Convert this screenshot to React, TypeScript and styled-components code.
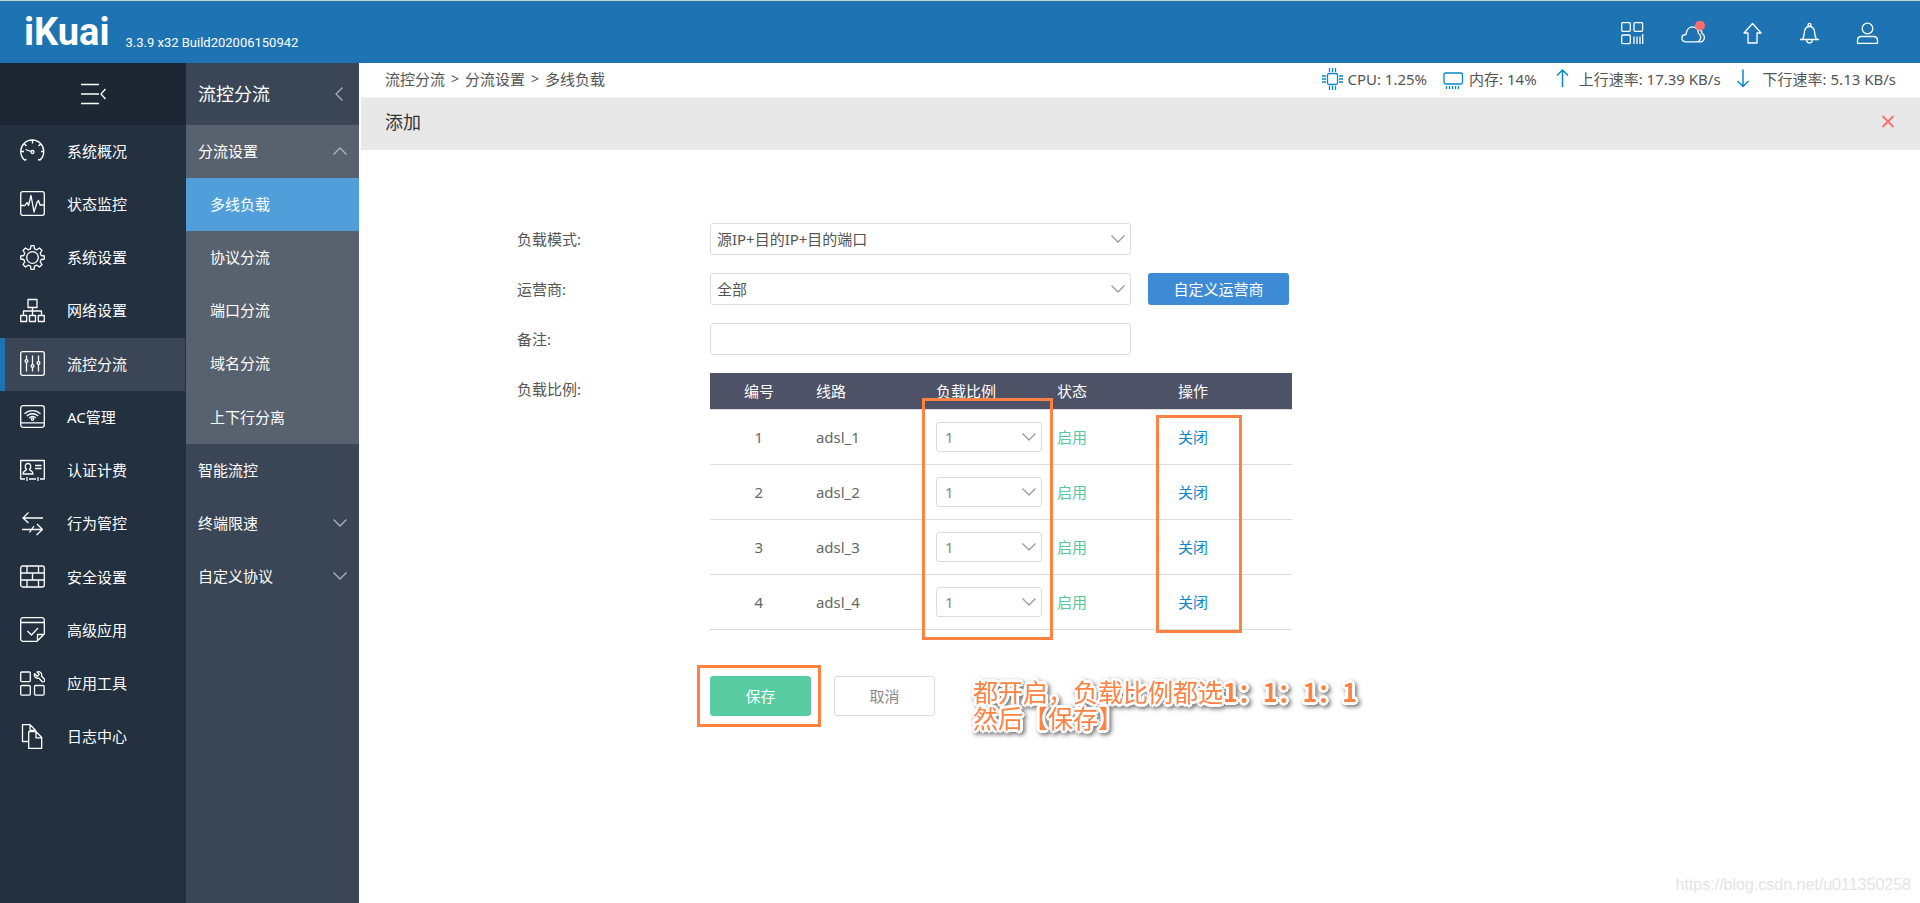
import React from "react";
import styled, { createGlobalStyle, css } from "styled-components";

const GlobalStyle = createGlobalStyle`
  * { box-sizing: border-box; }
  body { margin: 0; background: #fff; }
  body, button, input, select, table {
    font-family: "Noto Sans", "Noto Sans CJK SC", sans-serif;
    font-size: 15px;
    line-height: 20px;
    color: #555;
  }
  ul { list-style: none; margin: 0; padding: 0; }
  a { color: inherit; text-decoration: none; }
  button { cursor: pointer; padding: 0; border: 0; background: none; }
  svg { display: block; flex: none; }
`;

const ORANGE = "#ff8243";

const Page = styled.div`
  display: flex;
  flex-direction: column;
  min-height: 100vh;
`;

const Header = styled.header`
  display: flex;
  align-items: center;
  height: 63px;
  padding: 0 41px 0 24px;
  border-top: 1px solid #c5cdd3;
  background: #1e73b3;
  color: #fff;
`;

const Logo = styled.a`
  font-family: Roboto, sans-serif;
  font-size: 38px;
  font-weight: 700;
  line-height: 40px;
`;

const Version = styled.span`
  margin: 22px auto 0 16px;
  font-family: Roboto, "Noto Sans", sans-serif;
  font-size: 13px;
  line-height: 20px;
`;

const HeaderTools = styled.div`
  display: flex;
  align-items: center;
  gap: 34px;
  padding-top: 2px;
`;

const IconButton = styled.button`
  display: block;
  color: #fff;
`;

const Body = styled.div`
  display: flex;
  flex: 1;
`;

const Sidebar = styled.nav`
  flex: none;
  width: 186px;
  background: #223040;
  color: #fff;
`;

const Collapse = styled.button`
  display: flex;
  align-items: center;
  justify-content: center;
  width: 100%;
  height: 62px;
  padding-left: 2px;
  background: #1c2733;
  color: #fff;
`;

const MenuList = styled.ul`
  display: grid;
  grid-template-rows: repeat(12, 1fr);
  height: 639px;
`;

const MenuLink = styled.a<{ $active?: boolean }>`
  display: flex;
  align-items: center;
  gap: 22px;
  height: 100%;
  margin-right: 1px;
  padding: 0 0 2px 20px;
  ${(p) =>
    p.$active &&
    css`
      background: #3a4555;
      box-shadow: inset 5px 0 #1e73b3;
    `}
`;

const SubSidebar = styled.nav`
  flex: none;
  width: 173px;
  background: #3a4656;
  color: #fff;
`;

const SubTitle = styled.h2`
  display: flex;
  align-items: center;
  justify-content: space-between;
  height: 62px;
  margin: 0;
  padding: 0 16px 0 12px;
  font-size: 18px;
  font-weight: 400;
  line-height: 24px;
`;

const SubList = styled.ul`
  display: grid;
  grid-template-rows: repeat(9, 1fr);
  height: 479px;
`;

const SubLink = styled.a<{ $tone?: "group" | "active"; $nested?: boolean }>`
  display: flex;
  align-items: center;
  justify-content: space-between;
  height: 100%;
  padding: 0 12px 2px ${(p) => (p.$nested ? 24 : 12)}px;
  background: ${(p) =>
    p.$tone === "active" ? "#509fda" : p.$tone === "group" ? "#58616e" : "transparent"};
`;

const Main = styled.main`
  display: flex;
  flex: 1;
  flex-direction: column;
  min-width: 0;
  padding-left: 2px;
`;

const InfoBar = styled.div`
  display: flex;
  align-items: center;
  justify-content: space-between;
  height: 35px;
  padding: 0 24px 2px;
  border-bottom: 1px solid #f2f2f2;
`;

const Crumbs = styled.nav`
  display: flex;
  gap: 6px;
  span { font-size: 14px; }
`;

const Stats = styled.div`
  display: flex;
  gap: 16px;
`;

const Stat = styled.span`
  display: flex;
  align-items: center;
  white-space: nowrap;
`;

const PanelHead = styled.div`
  display: flex;
  align-items: center;
  justify-content: space-between;
  height: 52px;
  padding: 0 25px 4px 24px;
  background: #e8e8e8;
`;

const PanelTitle = styled.h1`
  margin: 0;
  color: #333;
  font-size: 18px;
  font-weight: 400;
  line-height: 24px;
`;

const Form = styled.form`
  display: grid;
  grid-template-columns: 193px minmax(0, 582px);
  row-gap: 18px;
  padding: 73px 0 0 10%;
`;

const Label = styled.label`
  line-height: 32px;
`;

const Field = styled.div`
  display: flex;
  gap: 17px;
  height: 32px;
`;

const control = css`
  width: 100%;
  height: 100%;
  border: 1px solid #dcdcdc;
  border-radius: 3px;
  background: #fff;
  outline: none;
`;

const TextInput = styled.input`
  ${control}
  padding: 0 6px;
`;

const ControlBox = styled.div<{ $small?: boolean }>`
  position: relative;
  width: ${(p) => (p.$small ? 106 : 421)}px;
  height: ${(p) => (p.$small ? 30 : 32)}px;
  svg {
    position: absolute;
    top: 50%;
    right: 6px;
    margin-top: -4px;
    pointer-events: none;
    color: #999;
  }
`;

const Select = styled.select<{ $small?: boolean }>`
  ${control}
  appearance: none;
  padding: 0 24px 0 ${(p) => (p.$small ? 8 : 6)}px;
  color: ${(p) => (p.$small ? "#888" : "#555")};
`;

const OperatorButton = styled.button`
  width: 141px;
  border-radius: 3px;
  background: #3d8bd5;
  color: #fff;
`;

const TableWrap = styled.div`
  position: relative;
`;

const Table = styled.table`
  width: 100%;
  table-layout: fixed;
  border-collapse: collapse;
  th, td {
    padding: 0 8px;
    border-bottom: 1px solid #dcdcdc;
    text-align: left;
  }
  th {
    height: 36px;
    background: #4d5266;
    color: #fff;
    font-weight: 400;
  }
  td { height: 55px; color: #666; }
  th:first-child, td:first-child { text-align: center; }
`;

const Status = styled.span`
  color: #56c99f;
`;

const RowAction = styled.button`
  color: #0d85cc;
`;

const Mark = styled.div`
  position: absolute;
  border: 3px solid ${ORANGE};
  pointer-events: none;
`;

const RatioMark = styled(Mark)`
  top: 25px;
  left: 212px;
  width: 131px;
  height: 242px;
`;

const ActionMark = styled(Mark)`
  top: 42px;
  left: 446px;
  width: 86px;
  height: 218px;
`;

const SaveMark = styled(Mark)`
  inset: -11px -10px -11px -13px;
`;

const Actions = styled.div`
  grid-column: 2;
  display: flex;
  align-items: flex-start;
  gap: 23px;
  margin-top: 28px;
`;

const SaveBox = styled.div`
  position: relative;
`;

const FormButton = styled.button<{ $primary?: boolean }>`
  display: block;
  flex: none;
  width: 101px;
  height: 40px;
  border: 1px solid ${(p) => (p.$primary ? "#59cba1" : "#dcdcdc")};
  border-radius: 3px;
  background: ${(p) => (p.$primary ? "#59cba1" : "#fff")};
  color: ${(p) => (p.$primary ? "#fff" : "#888")};
`;

const Note = styled.p`
  margin: 2px 0 0 15px;
  color: ${ORANGE};
  font-family: "Noto Sans CJK SC", sans-serif;
  font-size: 25px;
  line-height: 26px;
  white-space: nowrap;
  text-shadow: 3px 0 #fff, -3px 0 #fff, 0 3px #fff, 0 -3px #fff,
    2px 2px #fff, -2px 2px #fff, 2px -2px #fff, -2px -2px #fff;
  filter: drop-shadow(2px 2px 2px rgba(0, 0, 0, 0.55));
  b { font-weight: 700; }
`;

const Watermark = styled.footer`
  margin-top: auto;
  padding: 0 9px 8px 0;
  color: #e4e4e4;
  font-family: "Liberation Sans", sans-serif;
  font-size: 16px;
  line-height: 20px;
  text-align: right;
`;

type IconProps = {
  w?: number;
  h?: number;
  stroke?: number;
  color?: string;
  children: React.ReactNode;
};

const Icon = ({ w = 25, h = 25, stroke = 1.3, color = "currentColor", children }: IconProps) => (
  <svg
    width={w}
    height={h}
    viewBox={`0 0 ${w} ${h}`}
    fill="none"
    stroke={color}
    strokeWidth={stroke}
    strokeLinejoin="round"
    aria-hidden="true"
  >
    {children}
  </svg>
);

const Chevron = ({ up = false, color }: { up?: boolean; color?: string }) => (
  <Icon w={14} h={8} color={color}>
    <path d={up ? "M.5 7.5 7 1l6.500 6.500" : "M.5.5 7 7 13.500.5"} />
  </Icon>
);

const menu: { label: string; art: React.ReactNode }[] = [
  {
    label: "系统概况",
    art: (
      <>
        <path d="M6.500 21.500 4.500 22A11.500 11.500 0 1 1 20 22l-2-.5M1 13.500h3M21 13.500h3M12.500 2v3.500M4.500 6l2 2M20.500 6l-2 2" />
        <path d="m5.500 11.500 5.500 2" />
        <circle cx="12.500" cy="14" r="1.500" />
      </>
    ),
  },
  {
    label: "状态监控",
    art: (
      <>
        <rect x=".7" y=".7" width="23.600" height="23.600" rx="2" />
        <path d="M1 14.500h4l2-3 1.500 3L11 4.500l3 16.500 3-9.500 1.500-2 1.500 4.500h4.500" />
      </>
    ),
  },
  {
    label: "系统设置",
    art: (
      <>
        <circle cx="12.500" cy="12.500" r="5.800" />
        <path d="M10.500 3.800 11 .7h3l.5 3.100 2.400 1 2.600-1.800 2.500 2.500-1.800 2.600 1 2.400 3.100.5v3l-3.100.5-1 2.400 1.800 2.600-2.500 2.500-2.600-1.800-2.400 1-.5 3.100h-3l-.5-3.100-2.400-1L5.500 22 3 19.500l1.800-2.600-1-2.400-3.100-.5v-3l3.100-.5 1-2.400L3 5.500 5.500 3l2.600 1.800z" />
      </>
    ),
  },
  {
    label: "网络设置",
    art: (
      <>
        <rect x="8" y="1.500" width="9" height="8" />
        <path d="M12.500 9.500v8M3.500 17.500V13h18v4.500" />
        <rect x=".7" y="17.500" width="6" height="6" />
        <rect x="9.500" y="17.500" width="6" height="6" />
        <rect x="18.300" y="17.500" width="6" height="6" />
      </>
    ),
  },
  {
    label: "流控分流",
    art: (
      <>
        <rect x=".7" y=".7" width="23.600" height="23.600" rx="2" />
        <path d="M6.500 4.500v4M6.500 11.500v9M12.500 4.500v9M12.500 16.500v4M18.500 4.500v6M18.500 13.500v7" />
        <circle cx="6.500" cy="10" r="1.400" />
        <circle cx="12.500" cy="15" r="1.400" />
        <circle cx="18.500" cy="12" r="1.400" />
      </>
    ),
  },
  {
    label: "AC管理",
    art: (
      <>
        <rect x=".7" y="1.700" width="23.600" height="21.600" rx="2.500" />
        <path d="M1 18.800h23.500M4.500 9.800a11.500 11.500 0 0 1 16 0M6.800 12a8.400 8.400 0 0 1 11.400 0M9.200 14a5 5 0 0 1 6.600 0" />
        <circle cx="12.500" cy="15" r="1.200" />
      </>
    ),
  },
  {
    label: "认证计费",
    art: (
      <>
        <path d="M5 21H.7V2.500h23.600V21H20M9 21h7M7 19v4M18 19v4M15 7.500h6.500M15 10.500h6.500" />
        <path d="M6.500 11.500C4 8.500 5.500 5.500 8 5.500s4 3 1.500 6c.5 1.500 3.500 1 3.500 4.500H3c0-3.500 3-3 3.500-4.500z" />
      </>
    ),
  },
  {
    label: "行为管控",
    art: <path d="M23 7H2.500M8.500 1.500 3 7l5.500 5M2 18.500h20.500M17 13l5.500 5.500-6 5.500M9.500 21.500l4.500-6.500" />,
  },
  {
    label: "安全设置",
    art: (
      <>
        <rect x=".7" y="2" width="23.600" height="21" rx="2" />
        <path d="M1 9h23.500M1 16h23.500M7 2v7M18.500 2v7M12.500 9v7M7 16v7M18.500 16v7" />
      </>
    ),
  },
  {
    label: "高级应用",
    art: (
      <>
        <path d="M17 24.300H3a2.300 2.300 0 0 1-2.300-2.300V3A2.300 2.300 0 0 1 3 .7h19A2.300 2.300 0 0 1 24.300 3v14zM1 5.500h23.500M17.500 24v-6.500H24" />
        <path d="m7.500 14 4 4 6.500-7" />
      </>
    ),
  },
  {
    label: "应用工具",
    art: (
      <>
        <rect x=".7" y="1" width="9.600" height="9.600" rx="1" />
        <rect x=".7" y="14.500" width="9.600" height="9.600" rx="1" />
        <rect x="14.500" y="14.500" width="9.600" height="9.600" rx="1" />
        <path d="M17 1c2.500-1 5.500 1 4.500 4l3 3.200c1 1.600-1 3.400-2.500 2.300l-3-3.300c-3 .6-5.300-1.500-4.500-4.500l2.800 2.600 1.900-1.900z" />
      </>
    ),
  },
  {
    label: "日志中心",
    art: (
      <>
        <path d="M8 17.500H2.500V.7H10l5.500 5.500V8M10 1v5.500h5" />
        <path d="M8.700 7.700h7.500l5.500 5.800v10.800h-13zM16 8v5.800h5.500" />
      </>
    ),
  },
];

const submenu: {
  label: string;
  nested?: boolean;
  tone?: "group" | "active";
  arrow?: "up" | "down";
}[] = [
  { label: "分流设置", tone: "group", arrow: "up" },
  { label: "多线负载", tone: "active", nested: true },
  { label: "协议分流", tone: "group", nested: true },
  { label: "端口分流", tone: "group", nested: true },
  { label: "域名分流", tone: "group", nested: true },
  { label: "上下行分离", tone: "group", nested: true },
  { label: "智能流控" },
  { label: "终端限速", arrow: "down" },
  { label: "自定义协议", arrow: "down" },
];

const lines = ["adsl_1", "adsl_2", "adsl_3", "adsl_4"];
const BLUE = "#0d85cc";

export default function App() {
  return (
    <Page lang="zh-CN">
      <GlobalStyle />
      <Header>
        <Logo href="#">iKuai</Logo>
        <Version>3.3.9 x32 Build202006150942</Version>
        <HeaderTools>
          <IconButton aria-label="应用">
            <Icon w={30} h={24}>
              <rect x="4.700" y="1.700" width="8.600" height="8.600" rx="1" />
              <rect x="17" y="1.700" width="8.600" height="8.600" rx="1" />
              <rect x="4.700" y="14" width="8.600" height="8.600" rx="1" />
              <path d="M17 15.500v7.500M20 15.500v7.500M23 15.500v7.500M25.700 13v10" />
            </Icon>
          </IconButton>
          <IconButton aria-label="云">
            <Icon w={24} h={24}>
              <path d="M5 20.800c-5.500 0-5.500-7 0-7.300C6 3 17.500 4 17.500 12.500c3.500 1.500 2.500 8.300-1.500 8.300zM18 9c2 0 3 1.500 3 3.500 4 2 2.500 8.300-1.500 8.300H16" />
              <circle cx="19" cy="4.500" r="5" fill="#ff6b6e" stroke="none" />
            </Icon>
          </IconButton>
          <IconButton aria-label="升级">
            <Icon w={24} h={24}>
              <path d="M13.500 2.500 22 12h-4v10H9V12H5z" />
            </Icon>
          </IconButton>
          <IconButton aria-label="通知">
            <Icon w={24} h={24}>
              <path d="M3 18.500h19M5.500 18.500c1.500-2.500 1.500-4 2-8 .5-3 2-5 5-5s4.500 2 5 5c.5 4 .5 5.500 2 8M9.500 19c.5 4 5.500 4 6 0" />
              <circle cx="12.500" cy="3.800" r="1.500" />
            </Icon>
          </IconButton>
          <IconButton aria-label="用户">
            <Icon w={24} h={24}>
              <circle cx="12.500" cy="7.500" r="5.300" />
              <path d="M2.500 22.300v-2.800q0-4 4-4h12q4 0 4 4v2.800z" />
            </Icon>
          </IconButton>
        </HeaderTools>
      </Header>
      <Body>
        <Sidebar>
          <Collapse aria-label="收起菜单">
            <Icon w={26} h={22}>
              <path d="M0 1.500h18M0 11h18M0 20.500h18M24.500 6 20 11l4.500 5" />
            </Icon>
          </Collapse>
          <MenuList>
            {menu.map((m) => (
              <li key={m.label}>
                <MenuLink href="#" $active={m.label === "流控分流"}>
                  <Icon>{m.art}</Icon>
                  {m.label}
                </MenuLink>
              </li>
            ))}
          </MenuList>
        </Sidebar>
        <SubSidebar>
          <SubTitle>
            流控分流
            <Icon w={8} h={14} color="#a9afb7">
              <path d="M7.500.5 1 7l6.500 6.500" />
            </Icon>
          </SubTitle>
          <SubList>
            {submenu.map((s) => (
              <li key={s.label}>
                <SubLink href="#" $tone={s.tone} $nested={s.nested}>
                  {s.label}
                  {s.arrow && <Chevron up={s.arrow === "up"} color="#b0b5bb" />}
                </SubLink>
              </li>
            ))}
          </SubList>
        </SubSidebar>
        <Main>
          <InfoBar>
            <Crumbs aria-label="当前位置">
              <a href="#">流控分流</a>
              <span>&gt;</span>
              <a href="#">分流设置</a>
              <span>&gt;</span>
              <a href="#">多线负载</a>
            </Crumbs>
            <Stats>
              <Stat>
                <Icon w={26} h={22} color={BLUE}>
                  <rect x="6.500" y="5.500" width="10" height="11" rx="1.500" />
                  <path d="M8.500 0v4M11.500 0v4M14.500 0v4M8.500 18v4M11.500 18v4M14.500 18v4M1 8h4M1 11h4M1 14h4M18 8h4M18 11h4M18 14h4" />
                </Icon>
                CPU: 1.25%
              </Stat>
              <Stat>
                <Icon w={26} h={22} color={BLUE}>
                  <rect x="1" y="5" width="18.500" height="11" rx="1.500" />
                  <path d="M3.500 18v3M6.500 18v3M9.500 18v3M12.500 18v3M15.500 18v3" />
                </Icon>
                内存: 14%
              </Stat>
              <Stat>
                <Icon w={26} h={22} color={BLUE} stroke={1.500}>
                  <path d="M9.500 19V2M4 7.500 9.500 2 15 7.500" />
                </Icon>
                上行速率: 17.39 KB/s
              </Stat>
              <Stat>
                <Icon w={26} h={22} color={BLUE} stroke={1.500}>
                  <path d="M6 1.500v17M.5 13 6 18.500l5.500-5.500" />
                </Icon>
                下行速率: 5.13 KB/s
              </Stat>
            </Stats>
          </InfoBar>
          <PanelHead>
            <PanelTitle>添加</PanelTitle>
            <button aria-label="关闭窗口">
              <Icon w={14} h={18} color="#ff6b6e" stroke={1.800}>
                <path d="M1.500 3l11 11M12.500 3l-11 11" />
              </Icon>
            </button>
          </PanelHead>
          <Form onSubmit={(e) => e.preventDefault()}>
            <Label htmlFor="mode">负载模式:</Label>
            <Field>
              <ControlBox>
                <Select id="mode">
                  <option>源IP+目的IP+目的端口</option>
                </Select>
                <Chevron />
              </ControlBox>
            </Field>
            <Label htmlFor="operator">运营商:</Label>
            <Field>
              <ControlBox>
                <Select id="operator">
                  <option>全部</option>
                </Select>
                <Chevron />
              </ControlBox>
              <OperatorButton type="button">自定义运营商</OperatorButton>
            </Field>
            <Label htmlFor="remark">备注:</Label>
            <Field>
              <ControlBox>
                <TextInput id="remark" type="text" />
              </ControlBox>
            </Field>
            <Label as="span" id="ratio-label">
              负载比例:
            </Label>
            <TableWrap>
              <Table aria-labelledby="ratio-label">
                <colgroup>
                  <col width="98" />
                  <col width="120" />
                  <col width="121" />
                  <col width="121" />
                  <col width="122" />
                </colgroup>
                <thead>
                  <tr>
                    <th>编号</th>
                    <th>线路</th>
                    <th>负载比例</th>
                    <th>状态</th>
                    <th>操作</th>
                  </tr>
                </thead>
                <tbody>
                  {lines.map((line, i) => (
                    <tr key={line}>
                      <td>{i + 1}</td>
                      <td>{line}</td>
                      <td>
                        <ControlBox $small>
                          <Select $small aria-label={`${line} 负载比例`}>
                            <option>1</option>
                          </Select>
                          <Chevron />
                        </ControlBox>
                      </td>
                      <td>
                        <Status>启用</Status>
                      </td>
                      <td>
                        <RowAction type="button">关闭</RowAction>
                      </td>
                    </tr>
                  ))}
                </tbody>
              </Table>
              <RatioMark />
              <ActionMark />
            </TableWrap>
            <Actions>
              <SaveBox>
                <FormButton $primary type="submit">
                  保存
                </FormButton>
                <SaveMark />
              </SaveBox>
              <FormButton type="button">取消</FormButton>
              <Note>
                都开启，负载比例都选<b>1：1：1：1</b>
                <br />
                然后【保存】
              </Note>
            </Actions>
          </Form>
          <Watermark>https://blog.csdn.net/u011350258</Watermark>
        </Main>
      </Body>
    </Page>
  );
}
